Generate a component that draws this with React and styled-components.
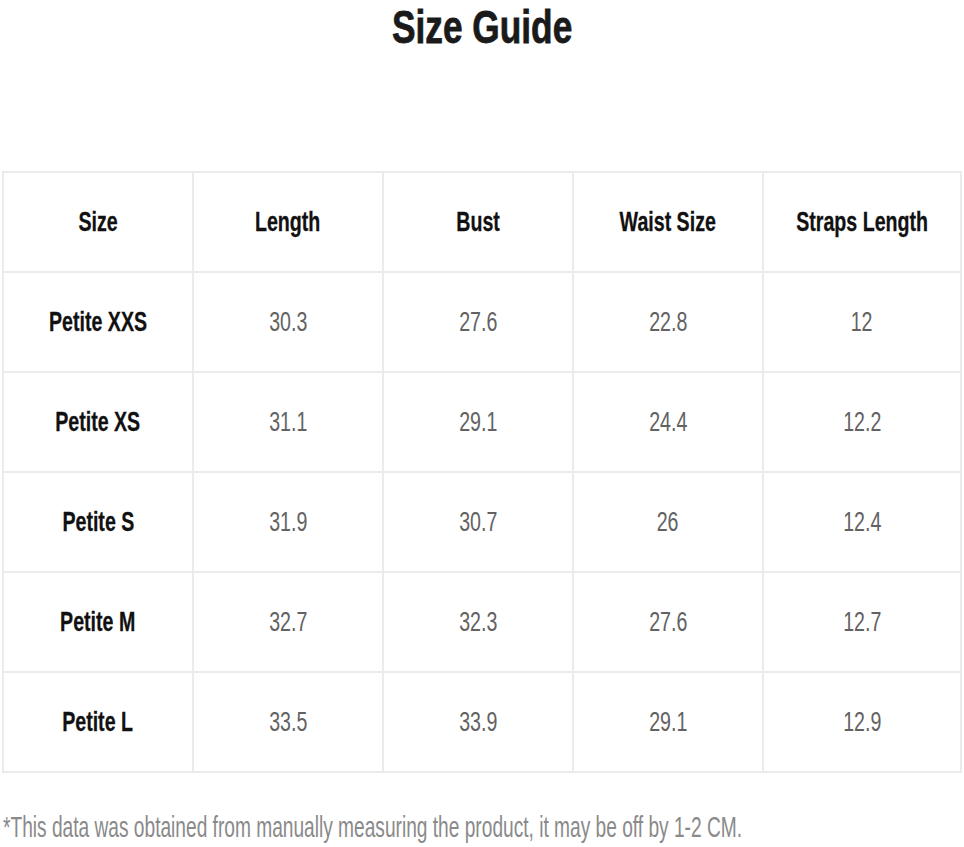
import React from 'react';
import styled, { createGlobalStyle } from 'styled-components';

const GlobalStyle = createGlobalStyle`
  html, body {
    margin: 0;
    padding: 0;
    background: #ffffff;
  }
  body {
    font-family: "Liberation Sans", Arial, sans-serif;
  }
`

const Page = styled.div`
  width: 964px;
  padding: 0 2px;
  box-sizing: border-box;
`

const Title = styled.h1`
  margin: 0;
  font-size: 47px;
  line-height: 54px;
  font-weight: 700;
  color: #1a1a1a;
  text-align: center;
  -webkit-text-stroke: 0.8px #1a1a1a;
`

const Squeeze = styled.span`
  display: inline-block;
  white-space: nowrap;
  transform: scaleX(${props => props.$scale || 0.7});
  transform-origin: ${props => props.$origin || 'center'};
`

const Table = styled.table`
  margin-top: 117px;
  width: 960px;
  border-collapse: collapse;
  table-layout: fixed;
`

const Cell = styled.td`
  height: 98px;
  padding: 0;
  border: 2px solid #ebebeb;
  text-align: center;
  vertical-align: middle;
  font-size: 28px;
  line-height: 30px;
  font-weight: ${props => (props.$strong ? 700 : 400)};
  color: ${props => (props.$strong ? '#111111' : '#626262')};
  -webkit-text-stroke: ${props => (props.$strong ? '0.3px #111111' : '0')};
`

const Note = styled.p`
  margin: 38px 0 0 1px;
  width: 900px;
  overflow: hidden;
  font-size: 29px;
  line-height: 32px;
  color: #8a8a8a;
`

const headers = ['Size', 'Length', 'Bust', 'Waist Size', 'Straps Length'];

const rows = [
  ['Petite XXS', '30.3', '27.6', '22.8', '12'],
  ['Petite XS', '31.1', '29.1', '24.4', '12.2'],
  ['Petite S', '31.9', '30.7', '26', '12.4'],
  ['Petite M', '32.7', '32.3', '27.6', '12.7'],
  ['Petite L', '33.5', '33.9', '29.1', '12.9'],
];

function App() {
  return (
    <Page>
      <GlobalStyle />
      <Title>
        <Squeeze $scale={0.75}>Size Guide</Squeeze>
      </Title>
      <Table>
        <colgroup>
          <col style={{ width: 190 }} />
          <col style={{ width: 190 }} />
          <col style={{ width: 190 }} />
          <col style={{ width: 190 }} />
          <col />
        </colgroup>
        <thead>
          <tr>
            {headers.map(h => (
              <Cell as="th" key={h} $strong>
                <Squeeze>{h}</Squeeze>
              </Cell>
            ))}
          </tr>
        </thead>
        <tbody>
          {rows.map(row => (
            <tr key={row[0]}>
              {row.map((value, i) => (
                <Cell key={i} $strong={i === 0}>
                  <Squeeze>{value}</Squeeze>
                </Cell>
              ))}
            </tr>
          ))}
        </tbody>
      </Table>
      <Note>
        <Squeeze $scale={0.66} $origin="left">
          *This data was obtained from manually measuring the product, it may be off by 1-2 CM.
        </Squeeze>
      </Note>
    </Page>
  );
}

export default App;
